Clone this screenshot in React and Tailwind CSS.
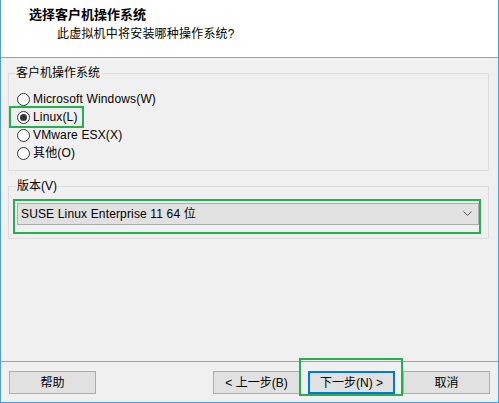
import React from 'react';

const FONT = { fontFamily: '"Liberation Sans", "Noto Sans CJK SC", sans-serif' };

const OPTIONS = [
  { label: 'Microsoft Windows(W)', checked: false },
  { label: 'Linux(L)', checked: true, mark: true },
  { label: 'VMware ESX(X)', checked: false },
  { label: '其他(O)', checked: false },
];

const Radio = ({ checked }) => (
  <span className="flex h-[13px] w-[13px] items-center justify-center rounded-full border border-[#333333] bg-white">
    {checked && <span className="h-[7px] w-[7px] rounded-full bg-[#333333]"></span>}
  </span>
);

const Button = ({ children, focused, mark }) => (
  <div className="relative">
    <button
      className={
        'flex h-[23px] w-[87px] items-center justify-center bg-[#e1e1e1] text-[12px] text-black ' +
        (focused ? 'border-2 border-[#0078d7]' : 'border border-[#adadad]')
      }
    >
      {children}
    </button>
    {mark && <span className="absolute left-[-9px] top-[-13px] h-[38px] w-[104px] border-2 border-[#22b14c]"></span>}
  </div>
);

export default function App() {
  return (
    <div
      className="flex h-[403px] w-[499px] flex-col border-x border-b border-[#4a9de0] bg-[#f0f0f0] text-[12px] text-black"
      style={FONT}
    >
      {/* header */}
      <div className="h-[58px] border-b border-[#a0a0a0] bg-white">
        <div className="pl-[28px] pt-[8px] text-[13px] font-bold leading-[14px]">选择客户机操作系统</div>
        <div className="pl-[56px] pt-[5px] leading-[14px] tracking-[0.2px]">此虚拟机中将安装哪种操作系统?</div>
      </div>

      {/* body */}
      <div className="flex-1 pl-[7px] pr-[9px]">
        <fieldset className="mt-[8px] border border-[#dcdcdc] pb-[8px] pl-[8px] pt-[10px]">
          <legend className="-ml-[2px] px-[1px] leading-[14px]">客户机操作系统</legend>
          <div className="flex flex-col">
            {OPTIONS.map((o) => (
              <div key={o.label} className="relative flex h-[18px] items-center gap-[3px]">
                <Radio checked={o.checked} />
                <span className="tracking-[0.15px]">{o.label}</span>
                {o.mark && <span className="absolute left-[-8px] top-[-2px] h-[22px] w-[75px] border-2 border-[#22b14c]"></span>}
              </div>
            ))}
          </div>
        </fieldset>

        <fieldset className="mt-[8px] border border-[#dcdcdc] pb-[13px] pl-[8px] pr-[9px] pt-[10px]">
          <legend className="-ml-[1px] px-[1px] leading-[14px]">版本(V)</legend>
          <div className="relative">
            <div className="flex h-[22px] items-center justify-between border border-[#adadad] bg-[#e1e1e1] pl-[3px] pr-[6px]">
              <span className="tracking-[0.15px]">SUSE Linux Enterprise 11 64 位</span>
              <svg width="9" height="6" viewBox="0 0 9 6">
                <polyline points="0.5,0.5 4.5,4.5 8.5,0.5" fill="none" stroke="#555" strokeWidth="1" />
              </svg>
            </div>
            <span className="absolute left-[-4px] top-[-4px] h-[35px] w-[468px] border-2 border-[#22b14c]"></span>
          </div>
        </fieldset>
      </div>

      {/* footer */}
      <div className="flex h-[41px] items-start border-t border-[#a0a0a0] pl-[8px] pr-[8px] pt-[9px]">
        <Button>帮助</Button>
        <div className="ml-auto flex gap-[8px]">
          <Button>&lt; 上一步(B)</Button>
          <Button focused mark>下一步(N) &gt;</Button>
          <Button>取消</Button>
        </div>
      </div>
    </div>
  );
}
